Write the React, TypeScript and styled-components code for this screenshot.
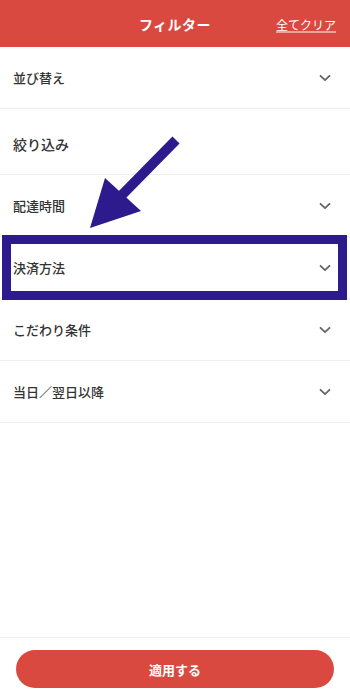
import React from "react";
import styled, { createGlobalStyle } from "styled-components";

const GlobalStyle = createGlobalStyle`
  html, body {
    margin: 0;
    padding: 0;
    background: #fff;
  }
  body {
    font-family: "Noto Sans CJK JP", "Noto Sans", sans-serif;
  }
`;

const Page = styled.div`
  position: relative;
  display: flex;
  flex-direction: column;
  height: 694px;
  background: #fff;
  overflow: hidden;
`;

const Header = styled.header`
  position: relative;
  display: flex;
  align-items: center;
  justify-content: center;
  height: 47px;
  background: #da4940;
  color: #fff;
`;

const Title = styled.h1`
  margin: 0;
  font-size: 14px;
  font-weight: 700;
  letter-spacing: 0.5px;
`;

const ClearLink = styled.a`
  position: absolute;
  right: 14px;
  top: 50%;
  transform: translateY(-50%);
  font-size: 12px;
  color: #fff;
  text-decoration: underline;
  text-underline-offset: 2px;
`;

const List = styled.div`
  position: relative;
  display: flex;
  flex-direction: column;
`;

const Row = styled.div<{ $highlight?: boolean; $tall?: boolean }>`
  position: relative;
  display: flex;
  align-items: center;
  justify-content: space-between;
  height: ${({ $tall }) => ($tall ? "61px" : "61px")};
  padding: ${({ $tall }) => ($tall ? "4px 18px 0 13px" : "0 18px 0 13px")};
  border-bottom: 1px solid #efefef;

  ${({ $highlight }) =>
    $highlight &&
    `
    &::after {
      content: "";
      position: absolute;
      left: 2px;
      right: 3px;
      top: -2px;
      bottom: -2px;
      border: 9px solid #2d1a8d;
      pointer-events: none;
    }
  `}
`;

const Label = styled.span<{ $large?: boolean }>`
  font-size: ${({ $large }) => ($large ? "14px" : "13px")};
  font-weight: 500;
  color: #333;
`;

const Chevron = styled.svg`
  width: 14px;
  height: 14px;
  color: #666;
`;

const Arrow = styled.svg`
  position: absolute;
  left: 0;
  top: 0;
  width: 350px;
  height: 400px;
  pointer-events: none;
`;

const Spacer = styled.div`
  flex: 1;
`;

const Footer = styled.footer`
  border-top: 1px solid #f0f0f0;
  padding: 12px 16px 6px;
`;

const ApplyButton = styled.button`
  display: block;
  width: 100%;
  height: 38px;
  border: none;
  border-radius: 19px;
  background: #da4940;
  color: #fff;
  font-family: inherit;
  font-size: 13px;
  font-weight: 700;
`;

const items = [
  { label: "並び替え", chevron: true },
  { label: "絞り込み", chevron: false, tall: true },
  { label: "配達時間", chevron: true },
  { label: "決済方法", chevron: true, highlight: true },
  { label: "こだわり条件", chevron: true },
  { label: "当日／翌日以降", chevron: true },
];

const ChevronIcon = () => (
  <Chevron viewBox="0 0 14 14" fill="none">
    <path d="M2.5 4.8 L7 9.2 L11.5 4.8" stroke="currentColor" strokeWidth="1.8" strokeLinecap="round" strokeLinejoin="round" />
  </Chevron>
);

export default function App() {
  return (
    <>
      <GlobalStyle />
      <Page>
        <Header>
          <Title>フィルター</Title>
          <ClearLink>全てクリア</ClearLink>
        </Header>
        <List>
          {items.map((item) => (
            <Row key={item.label} $highlight={item.highlight} $tall={item.tall}>
              <Label $large={item.tall}>{item.label}</Label>
              {item.chevron && <ChevronIcon />}
            </Row>
          ))}
          {/* annotation arrow pointing at the highlighted row */}
          <Arrow viewBox="0 0 350 400">
            <line x1="176" y1="93" x2="118" y2="152" stroke="#2d1a8d" strokeWidth="10" />
            <polygon points="90,181 105,131 141,164" fill="#2d1a8d" />
          </Arrow>
        </List>
        <Spacer />
        <Footer>
          <ApplyButton>適用する</ApplyButton>
        </Footer>
      </Page>
    </>
  );
}
